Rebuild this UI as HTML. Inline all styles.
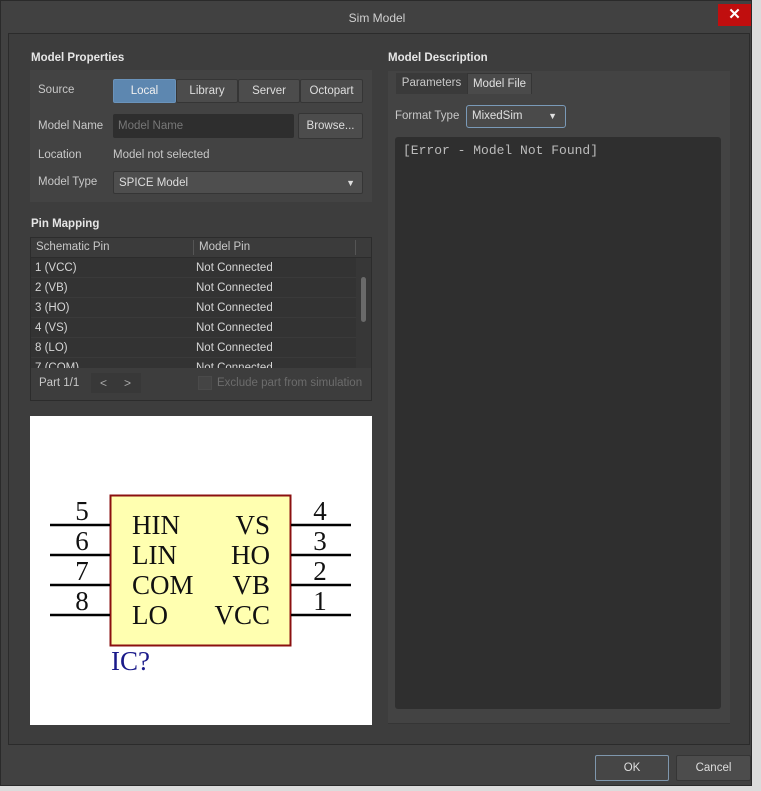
<!DOCTYPE html>
<html><head><style>
*{box-sizing:border-box;margin:0;padding:0}
body{width:761px;height:791px;background:#dcdcdc;font-family:"Liberation Sans",sans-serif;font-size:11.5px;color:#d6d6d6;position:relative;overflow:hidden}
.win{position:absolute;left:0;top:0;width:752px;height:786px;background:#414141;border:1px solid #2a2a2a}
.abs{position:absolute}
.title{left:0;top:0;width:752px;height:33px;text-align:center;line-height:34px;font-size:12px;color:#d0d0d0}
.close{left:717px;top:3px;width:33px;height:22px;background:#c00e0e;color:#fff;text-align:center;line-height:21px;font-size:15px;font-weight:bold}
.inner{left:8px;top:33px;width:742px;height:712px;background:#3d3d3d;border:1px solid #2b2b2b}
.h{font-weight:bold;color:#e6e6e6;font-size:11.5px}
.lbl{color:#c8c8c8}
.btn{background:#4c4c4c;border:1px solid #353535;border-radius:2px;text-align:center;color:#dedede}
.sect{background:#434343}
.row{left:32px;width:328px;height:20px;line-height:20px;border-bottom:1px solid #3a3a3a;background:#333}
.row span{position:absolute;left:4px}
.row b{font-weight:normal;position:absolute;left:165px}
</style></head><body>
<div class="win">
<div class="abs title">Sim Model</div>
<div class="abs close">✕</div>
</div>
<div class="abs inner"></div>

<div class="abs h" style="left:31px;top:52px">Model Properties</div>
<div class="abs sect" style="left:30px;top:70px;width:342px;height:132px"></div>
<div class="abs lbl" style="left:38px;top:84px">Source</div>
<div class="abs btn" style="left:113px;top:79px;width:63px;height:24px;line-height:22px;background:#5d87b0;border-color:#6a93bb;color:#f0f0f0">Local</div>
<div class="abs btn" style="left:176px;top:79px;width:62px;height:24px;line-height:22px">Library</div>
<div class="abs btn" style="left:238px;top:79px;width:62px;height:24px;line-height:22px">Server</div>
<div class="abs btn" style="left:300px;top:79px;width:63px;height:24px;line-height:22px">Octopart</div>
<div class="abs lbl" style="left:38px;top:120px">Model Name</div>
<div class="abs" style="left:113px;top:114px;width:181px;height:24px;background:#2e2e2e;border-radius:2px;color:#777;padding-left:5px;line-height:24px">Model Name</div>
<div class="abs btn" style="left:298px;top:113px;width:65px;height:26px;line-height:24px">Browse...</div>
<div class="abs lbl" style="left:38px;top:149px">Location</div>
<div class="abs lbl" style="left:113px;top:149px">Model not selected</div>
<div class="abs lbl" style="left:38px;top:176px">Model Type</div>
<div class="abs btn" style="left:113px;top:171px;width:250px;height:23px;line-height:22px;text-align:left;padding-left:5px;background:#4e4e4e">SPICE Model<span style="position:absolute;right:7px;top:0;font-size:9px">▼</span></div>

<div class="abs h" style="left:31px;top:218px">Pin Mapping</div>
<div class="abs" style="left:30px;top:237px;width:342px;height:164px;background:#404040;border:1px solid #2c2c2c"></div>
<div class="abs" style="left:31px;top:238px;width:340px;height:20px;background:#3b3b3b;border-bottom:1px solid #2c2c2c"></div>
<div class="abs lbl" style="left:36px;top:241px">Schematic Pin</div>
<div class="abs" style="left:193px;top:240px;width:1px;height:15px;background:#555"></div>
<div class="abs lbl" style="left:199px;top:241px">Model Pin</div>
<div class="abs" style="left:355px;top:240px;width:1px;height:15px;background:#555"></div>
<div class="abs" style="left:31px;top:258px;width:325px;height:110px;overflow:hidden;background:#333">
 <div style="position:relative">
 <div class="abs row" style="left:0;top:0"><span>1 (VCC)</span><b>Not Connected</b></div>
 <div class="abs row" style="left:0;top:20px"><span>2 (VB)</span><b>Not Connected</b></div>
 <div class="abs row" style="left:0;top:40px"><span>3 (HO)</span><b>Not Connected</b></div>
 <div class="abs row" style="left:0;top:60px"><span>4 (VS)</span><b>Not Connected</b></div>
 <div class="abs row" style="left:0;top:80px"><span>8 (LO)</span><b>Not Connected</b></div>
 <div class="abs row" style="left:0;top:100px"><span>7 (COM)</span><b>Not Connected</b></div>
 </div>
</div>
<div class="abs" style="left:356px;top:258px;width:15px;height:110px;background:#373737"></div>
<div class="abs" style="left:361px;top:277px;width:5px;height:45px;background:#6a6a6a;border-radius:3px"></div>
<div class="abs" style="left:31px;top:368px;width:340px;height:32px;background:#3d3d3d"></div>
<div class="abs lbl" style="left:39px;top:377px">Part 1/1</div>
<div class="abs" style="left:91px;top:373px;width:50px;height:20px;background:#383838;color:#aaa;font-size:12px;line-height:20px"><span style="position:absolute;left:9px">&lt;</span><span style="position:absolute;left:33px">&gt;</span></div>
<div class="abs" style="left:198px;top:376px;width:14px;height:14px;background:#444;border:1px solid #4a4a4a"></div>
<div class="abs" style="left:217px;top:377px;color:#6c6c6c">Exclude part from simulation</div>

<div class="abs" style="left:30px;top:416px;width:342px;height:309px;background:#fff"></div>
<svg class="abs" style="left:0;top:0" width="761" height="791">
<rect x="110.5" y="495.5" width="180" height="150" fill="#ffffb0" stroke="#8b1010" stroke-width="2"/>
<g stroke="#000" stroke-width="2.5">
<line x1="50" y1="525" x2="110" y2="525"/><line x1="50" y1="555" x2="110" y2="555"/><line x1="50" y1="585" x2="110" y2="585"/><line x1="50" y1="615" x2="110" y2="615"/>
<line x1="291" y1="525" x2="351" y2="525"/><line x1="291" y1="555" x2="351" y2="555"/><line x1="291" y1="585" x2="351" y2="585"/><line x1="291" y1="615" x2="351" y2="615"/>
</g>
<g font-family="Liberation Serif,serif" font-size="27" fill="#111">
<text x="82" y="520" text-anchor="middle">5</text><text x="82" y="550" text-anchor="middle">6</text><text x="82" y="580" text-anchor="middle">7</text><text x="82" y="610" text-anchor="middle">8</text>
<text x="320" y="520" text-anchor="middle">4</text><text x="320" y="550" text-anchor="middle">3</text><text x="320" y="580" text-anchor="middle">2</text><text x="320" y="610" text-anchor="middle">1</text>
<text x="132" y="534">HIN</text><text x="132" y="564">LIN</text><text x="132" y="594">COM</text><text x="132" y="624">LO</text>
<text x="270" y="534" text-anchor="end">VS</text><text x="270" y="564" text-anchor="end">HO</text><text x="270" y="594" text-anchor="end">VB</text><text x="270" y="624" text-anchor="end">VCC</text>
<text x="111" y="670" fill="#1a1a8a">IC?</text>
</g>
</svg>

<div class="abs h" style="left:388px;top:52px">Model Description</div>
<div class="abs" style="left:388px;top:71px;width:342px;height:23px;background:#434343"></div>
<div class="abs" style="left:396px;top:73px;width:71px;height:21px;background:#3a3a3a;line-height:21px;text-align:center;color:#c8c8c8">Parameters</div>
<div class="abs" style="left:467px;top:73px;width:65px;height:21px;background:#4a4a4a;border:1px solid #353535;border-bottom:none;line-height:20px;text-align:center;color:#e0e0e0">Model File</div>
<div class="abs" style="left:388px;top:94px;width:342px;height:630px;background:#434343;border-bottom:1px solid #353535"></div>
<div class="abs lbl" style="left:395px;top:110px">Format Type</div>
<div class="abs" style="left:466px;top:105px;width:100px;height:23px;background:#4a4a4a;border:1px solid #7a9ab8;border-radius:3px;line-height:21px;padding-left:5px;color:#e0e0e0">MixedSim<span style="position:absolute;right:8px;font-size:9px">▼</span></div>
<div class="abs" style="left:395px;top:137px;width:326px;height:572px;background:#2f2f2f;border-radius:3px;font-family:'Liberation Mono',monospace;font-size:13px;color:#bbb;padding:6px 0 0 8px">[Error - Model Not Found]</div>

<div class="abs btn" style="left:595px;top:755px;width:74px;height:26px;line-height:24px;border:1px solid #7f97ad;background:#464646">OK</div>
<div class="abs btn" style="left:676px;top:755px;width:75px;height:26px;line-height:24px">Cancel</div>
</body></html>
